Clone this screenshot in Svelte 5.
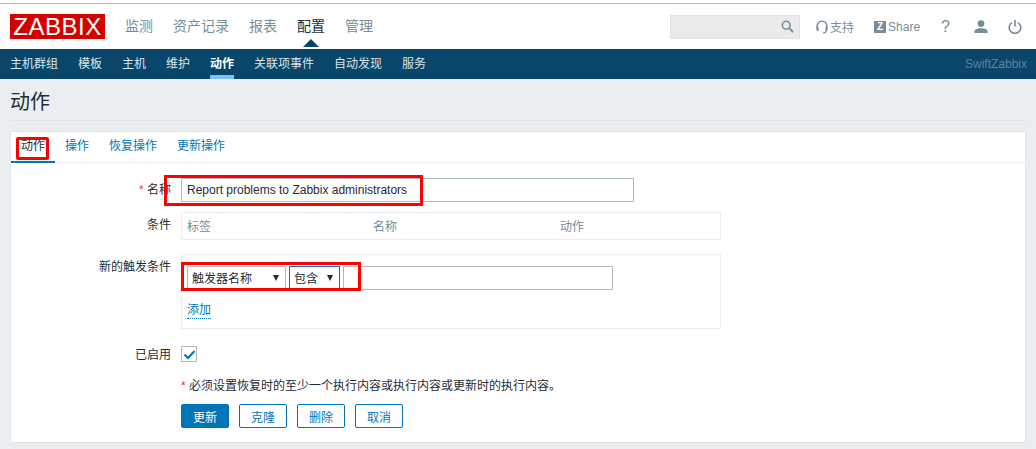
<script>
  const topNav = ['监测', '资产记录', '报表', '配置', '管理'];
  const subNav = ['主机群组', '模板', '主机', '维护', '动作', '关联项事件', '自动发现', '服务'];
  const tabs = ['动作', '操作', '恢复操作', '更新操作'];
  const buttons = ['克隆', '删除', '取消'];

  let enabled = $state(true);
</script>

<div class="page">
  <header class="top">
    <div class="logo">ZABBIX</div>
    <nav class="main-nav">
      {#each topNav as item}
        <a href="#top" class:active={item === '配置'}>{item}</a>
      {/each}
    </nav>
    <div class="tools">
      <div class="search">
        <svg width="13" height="13" viewBox="0 0 14 14" fill="none" stroke="#768d99" stroke-width="1.7">
          <circle cx="5.6" cy="5.6" r="4.2" />
          <path d="M8.8 8.8 13 13" stroke-width="2" />
        </svg>
      </div>
      <a class="tool support" href="#top">
        <svg width="12" height="14" viewBox="0 0 12 14" fill="none" stroke="#768d99" stroke-width="1.6">
          <path d="M1.200 8V6a4.800 4.800 0 0 1 9.600 0v2" />
          <rect x="0.400" y="7" width="2.200" height="4" rx="1" fill="#768d99" stroke="none" />
          <rect x="9.400" y="7" width="2.200" height="4" rx="1" fill="#768d99" stroke="none" />
          <path d="M10 11c0 1.400-1.200 2-3 2" stroke-width="1.200" />
        </svg>
        <span>支持</span>
      </a>
      <a class="tool share" href="#top"><span class="z">Z</span><span>Share</span></a>
      <a class="tool help" href="#top">?</a>
      <a class="tool user" href="#top">
        <svg width="14" height="13" viewBox="0 0 14 13" fill="#768d99">
          <circle cx="7" cy="3.600" r="3.400" />
          <path d="M0.500 13v-1.600c0-2 2.800-3.200 6.500-3.200s6.500 1.200 6.500 3.200V13z" />
        </svg>
      </a>
      <a class="tool power" href="#top">
        <svg width="14" height="14" viewBox="0 0 14 14" fill="none" stroke="#768d99" stroke-width="1.600">
          <path d="M4 2.600a5.800 5.800 0 1 0 6 0" />
          <path d="M7 0v6.500" />
        </svg>
      </a>
    </div>
  </header>

  <div class="sub">
    <nav class="sub-nav">
      {#each subNav as item}
        <a href="#top" class:active={item === '动作'}>{item}</a>
      {/each}
    </nav>
    <span class="server">SwiftZabbix</span>
  </div>

  <main class="content">
    <h1>动作</h1>
    <section class="card">
      <div class="tabs">
        {#each tabs as tab, i}
          <a href="#top" class:active={i === 0}>{tab}</a>
        {/each}
      </div>
      <div class="form">
        <label class="lbl name-lbl" for="name"><i>*</i> 名称</label>
        <input id="name" class="text wide" value="Report problems to Zabbix administrators" />

        <div class="lbl cond-lbl">条件</div>
        <div class="box cond">
          <span>标签</span><span>名称</span><span>动作</span>
        </div>

        <div class="lbl new-lbl">新的触发条件</div>
        <div class="box new">
          <div class="controls">
            <div class="select first">触发器名称<b></b></div>
            <div class="select second">包含<b></b></div>
            <input class="text value" />
          </div>
          <a class="add" href="#top">添加</a>
        </div>

        <div class="lbl on-lbl">已启用</div>
        <button class="check" type="button" aria-label="已启用" onclick={() => (enabled = !enabled)}>
          {#if enabled}
            <svg width="13" height="13" viewBox="0 0 13 13" fill="none" stroke="#0275b8" stroke-width="2">
              <path d="M1.500 6.500 5 10 11.500 3" />
            </svg>
          {/if}
        </button>

        <div class="note"><i>*</i> 必须设置恢复时的至少一个执行内容或执行内容或更新时的执行内容。</div>

        <div class="actions">
          <button class="btn primary" type="button">更新</button>
          {#each buttons as b}
            <button class="btn" type="button">{b}</button>
          {/each}
        </div>
      </div>

      <!-- screenshot annotations -->
      <div class="mark mark-tab"></div>
      <div class="mark mark-name"></div>
      <div class="mark mark-trigger"></div>
    </section>
  </main>
</div>

<style>
  :global(body) {
    margin: 0;
    background: #ebeef0;
  }
  .page {
    width: 1036px;
    height: 449px;
    overflow: hidden;
    font-family: "Liberation Sans", "Noto Sans CJK SC", sans-serif;
    font-size: 12px;
    color: #1f2c33;
    background: #ebeef0;
  }
  a {
    text-decoration: none;
  }
  .top {
    box-sizing: border-box;
    height: 49px;
    background: linear-gradient(#fff 3px, #b4b4b4 3px, #b4b4b4 4px, #fff 4px);
    display: flex;
    align-items: center;
    padding: 4px 0 0 10px;
    position: relative;
  }
  .logo {
    width: 95px;
    height: 25px;
    background: #d40000;
    color: #fff;
    font-size: 24px;
    line-height: 25px;
    text-align: center;
    letter-spacing: 0.5px;
  }
  .main-nav {
    display: flex;
    gap: 20px;
    margin-left: 20px;
    font-size: 14px;
  }
  .main-nav a {
    display: block;
    color: #768d99;
    line-height: 20px;
    position: relative;
    top: -1px;
  }
  .main-nav a.active {
    color: #1f2c33;
  }
  .main-nav a.active::after {
    content: "";
    position: absolute;
    left: 6px;
    top: 23px;
    border: 8px solid transparent;
    border-top: 0;
    border-bottom-color: #0a466a;
  }
  .tools {
    margin-left: auto;
    display: flex;
    align-items: center;
  }
  .search {
    box-sizing: border-box;
    width: 130px;
    height: 24px;
    background: #ebebeb;
    border: 1px solid #e3e3e3;
    display: flex;
    align-items: center;
    justify-content: flex-end;
    padding-right: 5px;
  }
  .tool {
    color: #768d99;
    display: flex;
    align-items: center;
  }
  .support {
    margin-left: 16px;
    gap: 2px;
  }
  .share {
    margin-left: 20px;
    gap: 2px;
  }
  .z {
    width: 12px;
    height: 12px;
    background: #768d99;
    color: #fff;
    font-size: 10px;
    font-weight: bold;
    line-height: 12px;
    text-align: center;
  }
  .help {
    margin-left: 21px;
    font-size: 16px;
  }
  .user {
    margin-left: 24px;
  }
  .power {
    margin-left: 20px;
    margin-right: 14px;
  }
  .sub {
    height: 30px;
    background: #0a466a;
    display: flex;
    justify-content: space-between;
    align-items: stretch;
    padding: 0 9px 0 10px;
  }
  .sub-nav {
    display: flex;
    gap: 20px;
  }
  .sub-nav a {
    color: #d9e5ec;
    line-height: 30px;
    position: relative;
  }
  .sub-nav a.active {
    color: #fff;
    font-weight: bold;
  }
  .sub-nav a.active::after {
    content: "";
    position: absolute;
    left: 0;
    right: 0;
    bottom: 0;
    height: 4px;
    background: #7cc0f0;
  }
  .server {
    color: #5f8298;
    line-height: 30px;
  }
  .content {
    padding: 0 10px;
  }
  h1 {
    margin: 0 0 10px;
    height: 42px;
    box-sizing: border-box;
    border-bottom: 1px solid #dfe4e7;
    font-size: 20px;
    font-weight: normal;
    line-height: 46px;
    color: #1f2c33;
  }
  .card {
    position: relative;
    box-sizing: border-box;
    height: 312px;
    background: #fff;
    border: 1px solid #dfe4e7;
  }
  .tabs {
    display: flex;
    box-sizing: border-box;
    height: 31px;
    border-bottom: 1px solid #ebeef0;
  }
  .tabs a {
    color: #0275b8;
    padding: 0 10px;
    line-height: 29px;
    box-sizing: border-box;
    height: 31px;
  }
  .tabs a.active {
    color: #1f2c33;
    border-bottom: 2px solid #0275b8;
  }
  .form {
    display: grid;
    grid-template-columns: 160px 540px;
    column-gap: 10px;
    padding-top: 15px;
    align-items: start;
  }
  .lbl {
    text-align: right;
    line-height: 24px;
  }
  i {
    font-style: normal;
    color: #e33734;
  }
  .text {
    box-sizing: border-box;
    height: 24px;
    border: 1px solid #acbbc4;
    padding: 0 5px;
    font: inherit;
    color: #1f2c33;
    outline: none;
    background: #fff;
  }
  .wide {
    width: 453px;
  }
  .box {
    box-sizing: border-box;
    border: 1px solid #ebeef0;
  }
  .cond-lbl,
  .cond {
    margin-top: 10px;
  }
  .cond-lbl {
    line-height: 26px;
  }
  .cond {
    height: 28px;
    display: grid;
    grid-template-columns: 186px 187px auto;
    padding: 0 5px;
    line-height: 28px;
    color: #768d99;
  }
  .new-lbl,
  .new {
    margin-top: 14px;
  }
  .new-lbl {
    line-height: 26px;
  }
  .new {
    height: 75px;
    padding: 11px 5px 0;
  }
  .controls {
    display: flex;
    gap: 3px;
  }
  .select {
    box-sizing: border-box;
    height: 24px;
    border: 1px solid #acbbc4;
    background: #fff;
    line-height: 24px;
    padding-left: 4px;
    position: relative;
  }
  .select b {
    position: absolute;
    right: 6px;
    top: 8px;
    border: 3.5px solid transparent;
    border-bottom: 0;
    border-top: 6px solid #1f2c33;
  }
  .first {
    width: 99px;
  }
  .second {
    width: 51px;
    border-color: #0275b8;
  }
  .value {
    width: 270px;
  }
  .add {
    display: inline-block;
    margin-top: 13px;
    color: #0275b8;
    line-height: 15px;
    border-bottom: 1px dotted #0275b8;
  }
  .on-lbl {
    margin-top: 14px;
    line-height: 24px;
  }
  .check {
    box-sizing: border-box;
    margin: 17px 0 0;
    padding: 0;
    width: 16px;
    height: 16px;
    background: #fff;
    border: 1px solid #acbbc4;
    display: flex;
    align-items: center;
    justify-content: center;
  }
  .note {
    grid-column: 2;
    margin-top: 11px;
    line-height: 16px;
  }
  .actions {
    grid-column: 2;
    margin-top: 10px;
    display: flex;
    gap: 10px;
  }
  .btn {
    box-sizing: border-box;
    width: 48px;
    height: 24px;
    padding: 0;
    font: inherit;
    color: #0275b8;
    background: #fff;
    border: 1px solid #0275b8;
    border-radius: 2px;
  }
  .primary {
    color: #fff;
    background: #0275b8;
  }
  .mark {
    position: absolute;
    box-sizing: border-box;
    border: 3px solid #f00;
  }
  .mark-tab {
    left: 5px;
    top: 5px;
    width: 33px;
    height: 23px;
    border-radius: 2px;
  }
  .mark-name {
    left: 153px;
    top: 43px;
    width: 259px;
    height: 31px;
  }
  .mark-trigger {
    left: 170px;
    top: 130px;
    width: 180px;
    height: 29px;
  }
</style>
